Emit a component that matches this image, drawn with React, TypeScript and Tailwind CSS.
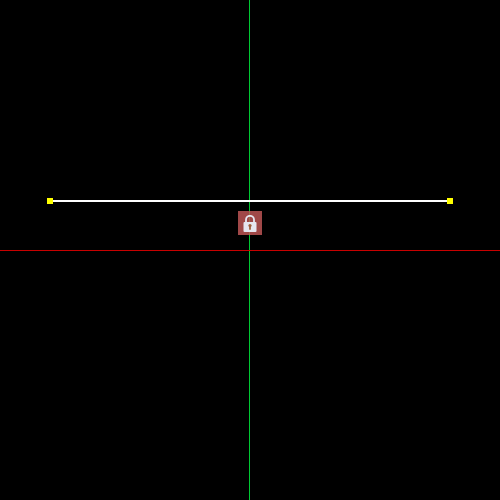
export default function App() {
  return (
    <div className="relative h-[500px] w-[500px] overflow-hidden bg-black">
      {/* guide lines */}
      <div className="absolute left-[249px] top-0 h-[500px] w-px bg-[#00c832]" />
      <div className="absolute left-0 top-[250px] h-px w-[500px] bg-[#c80000]" />

      {/* selected segment */}
      <div className="absolute left-[50px] top-[200px] h-[2px] w-[400px] bg-white" />
      <div className="absolute left-[47px] top-[198px] h-[6px] w-[6px] bg-[#ffff00]" />
      <div className="absolute left-[447px] top-[198px] h-[6px] w-[6px] bg-[#ffff00]" />

      {/* lock badge */}
      <div className="absolute left-[238px] top-[211px] flex h-6 w-6 items-center justify-center bg-[#c85a5a]/80">
        <svg width="14" height="17" viewBox="0 0 14 17">
          <path d="M3 8V4.8a4 4 0 0 1 8 0V8" fill="none" stroke="#e6e6f0" strokeWidth="1.8" />
          <rect x="0.5" y="7" width="13" height="10" rx="1" fill="#e6e6f0" />
          <circle cx="7" cy="10.5" r="1.6" fill="#a0603c" />
          <rect x="6.1" y="10.5" width="1.8" height="4.2" fill="#a0603c" />
        </svg>
      </div>
    </div>
  )
}
